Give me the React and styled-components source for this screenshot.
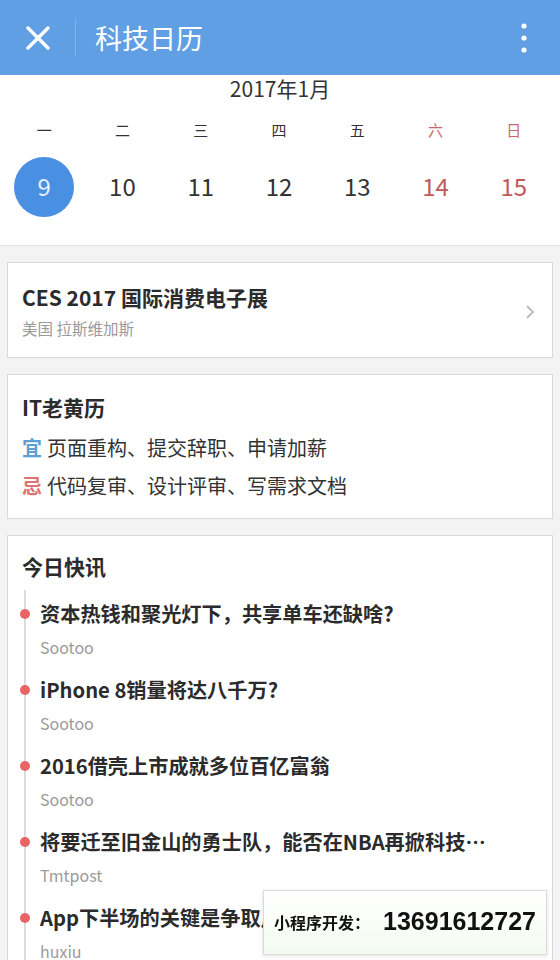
import React from "react";
import styled, { createGlobalStyle } from "styled-components";

const Global = createGlobalStyle`
  html, body { margin: 0; padding: 0; overflow: hidden; }
  body {
    background: #f3f3f3;
    font-family: "Noto Sans CJK SC", "Noto Sans", sans-serif;
    color: #333;
  }
`;

const Page = styled.div`
  width: 560px;
  height: 960px;
  overflow: hidden;
  background: #f3f3f3;
`;

const Header = styled.header`
  height: 75px;
  background: #609fe3;
  display: flex;
  align-items: center;
  padding: 0 20px 0 22px;
  box-sizing: border-box;
`;

const IconButton = styled.div`
  width: 32px;
  height: 32px;
  display: flex;
  align-items: center;
  justify-content: center;
`;

const Divider = styled.div`
  width: 1px;
  height: 37px;
  background: rgba(255, 255, 255, 0.22);
  margin: 0 19px 0 21px;
`;

const Title = styled.h1`
  flex: 1;
  margin: 0;
  font-size: 27px;
  font-weight: 400;
  color: #fff;
  line-height: 1;
`;

const Calendar = styled.section`
  background: #fff;
  border-bottom: 1px solid #e2e2e2;
  padding-bottom: 28px;
`;

const Month = styled.div`
  text-align: center;
  font-size: 21px;
  line-height: 26px;
  color: #333;
`;

const Grid = styled.div`
  display: grid;
  grid-template-columns: repeat(7, 1fr);
  padding: 0 7px 0 5px;
  margin-top: ${(p) => p.$mt}px;
`;

const Weekday = styled.div`
  text-align: center;
  font-size: 15px;
  line-height: 24px;
  color: ${(p) => (p.$weekend ? "#c96a6a" : "#333")};
`;

const DateCell = styled.div`
  height: 60px;
  display: flex;
  align-items: center;
  justify-content: center;
`;

const DateNum = styled.div`
  width: 60px;
  height: 60px;
  box-sizing: border-box;
  padding-bottom: 3px;
  border-radius: 50%;
  display: flex;
  align-items: center;
  justify-content: center;
  font-size: 24px;
  background: ${(p) => (p.$active ? "#4a90e2" : "transparent")};
  color: ${(p) => (p.$active ? "#e6f0ff" : p.$weekend ? "#c25a5a" : "#333")};
`;

const Card = styled.section`
  margin: 16px 7px 0 7px;
  background: #fff;
  border: 1px solid #d9d9d9;
  padding: ${(p) => p.$pad};
  box-sizing: border-box;
`;

const EventRow = styled.div`
  display: flex;
  align-items: center;
`;

const EventBody = styled.div`
  flex: 1;
`;

const CardTitle = styled.h2`
  margin: 0;
  font-size: 21px;
  line-height: 30px;
  font-weight: 700;
  color: #2b2b2b;
`;

const SubText = styled.div`
  margin-top: 5px;
  font-size: 15.5px;
  line-height: 22px;
  color: #9a9a9a;
`;

const Chevron = styled.div`
  width: 24px;
  display: flex;
  justify-content: center;
  margin-top: 2px;
`;

const AlmanacLine = styled.div`
  font-size: 20px;
  line-height: 38px;
  color: #333;
  margin-top: ${(p) => p.$mt || 0}px;
`;

const Tag = styled.span`
  color: ${(p) => p.$color};
  font-weight: 700;
  margin-right: 5px;
`;

const Timeline = styled.ul`
  list-style: none;
  margin: 9px 0 0 2px;
  padding: 9px 0 0 14px;
  border-left: 2px solid #dcdcdc;
`;

const NewsItem = styled.li`
  position: relative;
  padding-bottom: 16px;
`;

const Dot = styled.span`
  position: absolute;
  left: -20px;
  top: 10px;
  width: 10px;
  height: 10px;
  border-radius: 50%;
  background: #e96464;
`;

const NewsTitle = styled.div`
  font-size: 20.2px;
  line-height: 30px;
  font-weight: 700;
  color: #2b2b2b;
  white-space: nowrap;
  overflow: hidden;
  text-overflow: ellipsis;
`;

const Source = styled.div`
  margin-top: 6px;
  font-size: 16px;
  line-height: 24px;
  color: #9a9a9a;
`;

const Promo = styled.div`
  position: fixed;
  right: 13px;
  bottom: 5px;
  width: 284px;
  height: 65px;
  box-sizing: border-box;
  border: 1px solid #dadada;
  background: linear-gradient(#ffffff, #f3fbef);
  box-shadow: 0 1px 4px rgba(0, 0, 0, 0.12);
  display: flex;
  align-items: center;
  padding: 0 0 2px 10px;
  color: #111;
`;

const PromoLabel = styled.span`
  font-size: 16px;
  font-weight: 700;
  margin-right: 13px;
`;

const PromoNumber = styled.span`
  font-family: "Liberation Sans", Arial, sans-serif;
  font-size: 25px;
  font-weight: 700;
`;

const weekdays = ["一", "二", "三", "四", "五", "六", "日"];
const dates = [9, 10, 11, 12, 13, 14, 15];

const news = [
  { t: "资本热钱和聚光灯下，共享单车还缺啥?", s: "Sootoo" },
  { t: "iPhone 8销量将达八千万?", s: "Sootoo" },
  { t: "2016借壳上市成就多位百亿富翁", s: "Sootoo" },
  { t: "将要迁至旧金山的勇士队，能否在NBA再掀科技革命", s: "Tmtpost" },
  { t: "App下半场的关键是争取用户时间", s: "huxiu" },
];

export default function App() {
  return (
    <Page>
      <Global />
      <Header>
        <IconButton>
          <svg width="24" height="24" viewBox="0 0 24 24">
            <path d="M2 2 L22 22 M22 2 L2 22" stroke="#fff" strokeWidth="3.4" strokeLinecap="round" />
          </svg>
        </IconButton>
        <Divider />
        <Title>科技日历</Title>
        <IconButton>
          <svg width="8" height="32" viewBox="0 0 8 32">
            <circle cx="4" cy="4" r="2.6" fill="#fff" />
            <circle cx="4" cy="16" r="2.6" fill="#fff" />
            <circle cx="4" cy="28" r="2.6" fill="#fff" />
          </svg>
        </IconButton>
      </Header>

      <Calendar>
        <Month>2017年1月</Month>
        <Grid $mt={17}>
          {weekdays.map((w, i) => (
            <Weekday key={w} $weekend={i >= 5}>{w}</Weekday>
          ))}
        </Grid>
        <Grid $mt={15}>
          {dates.map((d, i) => (
            <DateCell key={d}>
              <DateNum $active={i === 0} $weekend={i >= 5}>{d}</DateNum>
            </DateCell>
          ))}
        </Grid>
      </Calendar>

      <Card $pad="19px 10px 18px 14px">
        <EventRow>
          <EventBody>
            <CardTitle>CES 2017 国际消费电子展</CardTitle>
            <SubText>美国 拉斯维加斯</SubText>
          </EventBody>
          <Chevron>
            <svg width="10" height="16" viewBox="0 0 10 16">
              <path d="M2 2 L8 8 L2 14" fill="none" stroke="#bdbdbd" strokeWidth="2" />
            </svg>
          </Chevron>
        </EventRow>
      </Card>

      <Card $pad="17px 14px 13px 14px">
        <CardTitle>IT老黄历</CardTitle>
        <AlmanacLine $mt={7}>
          <Tag $color="#5a9fd6">宜</Tag>页面重构、提交辞职、申请加薪
        </AlmanacLine>
        <AlmanacLine>
          <Tag $color="#df7272">忌</Tag>代码复审、设计评审、写需求文档
        </AlmanacLine>
      </Card>

      <Card $pad="15px 57px 0 14px">
        <CardTitle>今日快讯</CardTitle>
        <Timeline>
          {news.map((n) => (
            <NewsItem key={n.t}>
              <Dot />
              <NewsTitle>{n.t}</NewsTitle>
              <Source>{n.s}</Source>
            </NewsItem>
          ))}
        </Timeline>
      </Card>

      <Promo>
        <PromoLabel>小程序开发：</PromoLabel>
        <PromoNumber>13691612727</PromoNumber>
      </Promo>
    </Page>
  );
}
